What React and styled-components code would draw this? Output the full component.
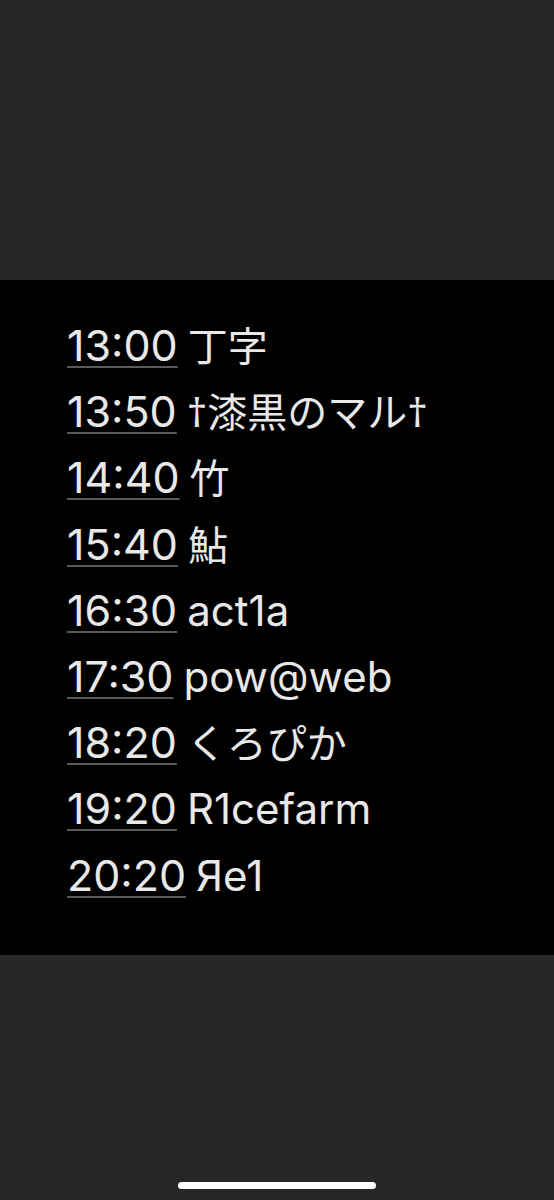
import React from "react";
import styled, { createGlobalStyle } from "styled-components";

const GlobalStyle = createGlobalStyle`
  html, body {
    margin: 0;
    padding: 0;
    background: #272727;
  }
  body {
    font-family: Inter, "Noto Sans CJK JP", sans-serif;
  }
`;

const schedule = [
  { time: "13:00", name: "丁字" },
  { time: "13:50", name: "†漆黒のマル†" },
  { time: "14:40", name: "竹" },
  { time: "15:40", name: "鮎" },
  { time: "16:30", name: "act1a" },
  { time: "17:30", name: "pow@web" },
  { time: "18:20", name: "くろぴか" },
  { time: "19:20", name: "R1cefarm" },
  { time: "20:20", name: "Яe1" },
];

const Screen = styled.div`
  width: 554px;
  height: 1200px;
  display: flex;
  flex-direction: column;
  background: #272727;
`;

const TopSpace = styled.div`
  height: 280px;
`;

const Panel = styled.div`
  height: 675px;
  background: #000;
  box-sizing: border-box;
  padding: 32px 0 0 67px;
`;

const List = styled.ul`
  list-style: none;
  margin: 0;
  padding: 0;
`;

const Row = styled.li`
  height: 66.2px;
  display: flex;
  align-items: baseline;
  gap: 10px;
  font-size: 43px;
  line-height: 66px;
  color: #e8e8e8;
  white-space: nowrap;
`;

const Time = styled.span`
  text-decoration: underline;
  text-decoration-color: #5a5a5a;
  text-decoration-thickness: 2px;
  text-underline-offset: 5px;
  font-family: Inter, sans-serif;
`;

const Name = styled.span`
  font-family: ${(p) =>
    p.$cjk ? `"Noto Sans", "Noto Sans CJK JP", sans-serif` : `Inter, sans-serif`};
  font-size: ${(p) => (p.$cjk ? "40px" : "42px")};
`;

const Bottom = styled.div`
  flex: 1;
  display: flex;
  align-items: flex-end;
  justify-content: center;
  padding-bottom: 11px;
`;

const HomeBar = styled.div`
  width: 198px;
  height: 7px;
  border-radius: 4px;
  background: #fff;
`;

const isCjk = (s) => /[\u3000-\u9fff†]/.test(s);

export default function App() {
  return (
    <Screen>
      <GlobalStyle />
      <TopSpace />
      <Panel>
        <List>
          {schedule.map((item) => (
            <Row key={item.time}>
              <Time>{item.time}</Time>
              <Name $cjk={isCjk(item.name)}>{item.name}</Name>
            </Row>
          ))}
        </List>
      </Panel>
      <Bottom>
        <HomeBar />
      </Bottom>
    </Screen>
  );
}
